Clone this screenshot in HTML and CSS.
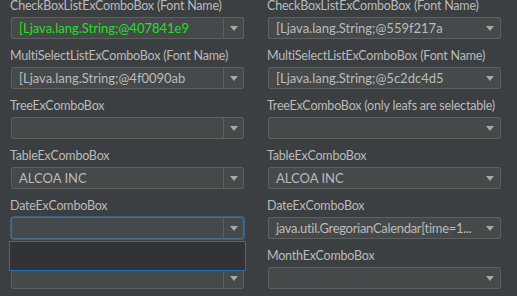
FILE: index.html
```html
<!DOCTYPE html>
<html lang="en">
<head>
	<meta charset="UTF-8">
	<title>ExComboBox demo</title>
	<link rel="stylesheet" href="styles.css">
</head>
<body>
	<div class="panel">
		<section class="field">
			<p class="name">CheckBoxListExComboBox (Font Name)</p>
			<div class="combo editable">
				<span class="value green">[Ljava.lang.String;@407841e9</span>
				<span class="arrow"></span>
			</div>
		</section>
		<section class="field">
			<p class="name">CheckBoxListExComboBox (Font Name)</p>
			<div class="combo">
				<span class="value">[Ljava.lang.String;@559f217a</span>
				<span class="arrow"></span>
			</div>
		</section>

		<section class="field">
			<p class="name">MultiSelectListExComboBox (Font Name)</p>
			<div class="combo editable">
				<span class="value">[Ljava.lang.String;@4f0090ab</span>
				<span class="arrow"></span>
			</div>
		</section>
		<section class="field">
			<p class="name">MultiSelectListExComboBox (Font Name)</p>
			<div class="combo">
				<span class="value">[Ljava.lang.String;@5c2dc4d5</span>
				<span class="arrow"></span>
			</div>
		</section>

		<section class="field">
			<p class="name">TreeExComboBox</p>
			<div class="combo editable">
				<span class="value"></span>
				<span class="arrow"></span>
			</div>
		</section>
		<section class="field">
			<p class="name">TreeExComboBox (only leafs are selectable)</p>
			<div class="combo">
				<span class="value"></span>
				<span class="arrow"></span>
			</div>
		</section>

		<section class="field">
			<p class="name">TableExComboBox</p>
			<div class="combo editable">
				<span class="value">ALCOA INC</span>
				<span class="arrow"></span>
			</div>
		</section>
		<section class="field">
			<p class="name">TableExComboBox</p>
			<div class="combo">
				<span class="value">ALCOA INC</span>
				<span class="arrow"></span>
			</div>
		</section>

		<section class="field">
			<p class="name">DateExComboBox</p>
			<div class="combo editable focused">
				<span class="value"></span>
				<span class="arrow"></span>
				<div class="popup"></div>
			</div>
		</section>
		<section class="field">
			<p class="name">DateExComboBox</p>
			<div class="combo">
				<span class="value long">java.util.GregorianCalendar[time=1...</span>
				<span class="arrow"></span>
			</div>
		</section>

		<section class="field">
			<p class="name">MonthExComboBox</p>
			<div class="combo editable">
				<span class="value"></span>
				<span class="arrow"></span>
			</div>
		</section>
		<section class="field">
			<p class="name">MonthExComboBox</p>
			<div class="combo">
				<span class="value"></span>
				<span class="arrow"></span>
			</div>
		</section>
	</div>
</body>
</html>
```

FILE: styles.css
```css
* {
	margin: 0;
	padding: 0;
	box-sizing: border-box;
}
html, body {
	height: 100%;
	overflow: hidden;
}
body {
	background: #3c3f41;
	font-family: Lato, 'Open Sans', sans-serif;
	font-size: 12.5px;
	color: #bbbbbb;
}
.panel {
	display: grid;
	grid-template-columns: 235px 235px;
	column-gap: 22px;
	padding: 0 15px 0 10px;
}
.field {
	height: 50px;
}
.name {
	line-height: 11px;
	height: 11px;
	letter-spacing: -0.2px;
	white-space: nowrap;
}
.combo {
	position: relative;
	display: flex;
	align-items: center;
	height: 22px;
	margin: 6px 1px 0;
	border: 1px solid #5e6060;
	border-radius: 2px;
	background: #45494a;
}
.value {
	flex: 1;
	min-width: 0;
	padding-left: 7px;
	font-size: 13px;
	line-height: 20px;
	white-space: nowrap;
	overflow: hidden;
}
.long {
	letter-spacing: -0.3px;
}
.green {
	color: #22e022;
}
.arrow {
	display: flex;
	align-items: center;
	justify-content: center;
	flex-shrink: 0;
	width: 20px;
	height: 20px;
}
.arrow::after {
	content: '';
	border-left: 4.5px solid transparent;
	border-right: 4.5px solid transparent;
	border-top: 5px solid #a7a7a7;
}
.editable .arrow {
	border-left: 1px solid #5e6060;
}
.focused {
	border-color: #466b90;
	box-shadow: 0 0 0 1px #3d6185;
	border-radius: 3px;
}
.popup {
	position: absolute;
	left: -3px;
	right: -3px;
	top: 23px;
	height: 30px;
	background: #313335;
	border: 1px solid #1f72c2;
	z-index: 2;
}
```
